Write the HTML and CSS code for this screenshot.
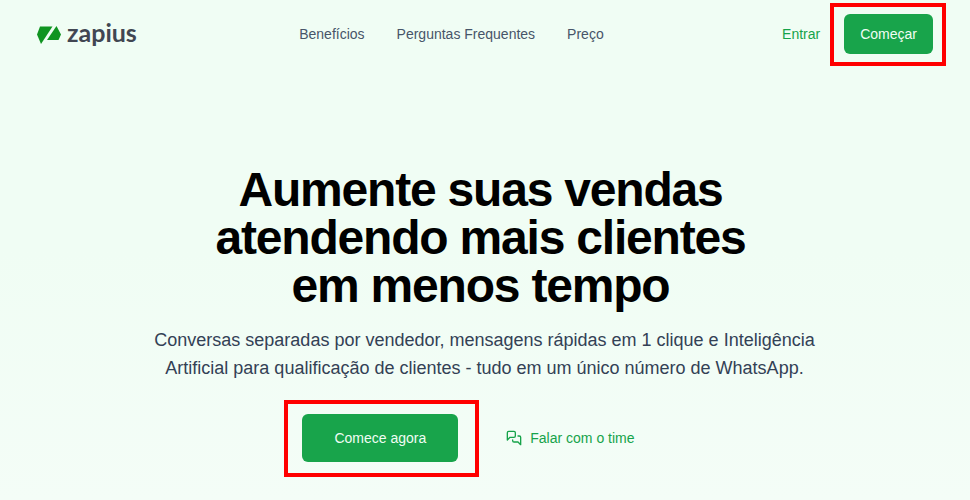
FILE: index.html
```html
<!DOCTYPE html>
<html lang="pt-BR">
<head>
<meta charset="utf-8">
<meta name="viewport" content="width=device-width, initial-scale=1">
<title>Zapius</title>
<link rel="stylesheet" href="styles.css">
</head>
<body>
<header class="topbar">
  <a class="logo" href="#">
    <svg class="logo-mark" viewBox="0 0 24 18" aria-hidden="true">
      <path fill="#109421" d="M3 0.500H15.500L4 18L0 8.500Z"/>
      <path fill="#109421" d="M19.500 0L24 8.500L21.500 14H10Z"/>
    </svg>
    <span class="logo-name">zapius</span>
  </a>
  <nav class="links">
    <a href="#beneficios">Benefícios</a>
    <a href="#perguntas">Perguntas Frequentes</a>
    <a href="#preco">Preço</a>
  </nav>
  <div class="account">
    <a class="link-button" href="#entrar">Entrar</a>
    <div class="marked marked-small"><button class="button" type="button">Começar</button></div>
  </div>
</header>
<main class="hero">
  <h1>Aumente suas vendas<br>atendendo mais clientes<br>em menos tempo</h1>
  <p>Conversas separadas por vendedor, mensagens rápidas em 1 clique e Inteligência Artificial para qualificação de clientes - tudo em um único número de WhatsApp.</p>
  <div class="actions">
    <div class="marked marked-large"><button class="button button-large" type="button">Comece agora</button></div>
    <a class="link-button link-large" href="#contato">
      <svg class="chat-icon" viewBox="0 0 24 24" aria-hidden="true"><path d="M14 9a2 2 0 0 1-2 2H6l-4 4V4c0-1.100.9-2 2-2h8a2 2 0 0 1 2 2z"/><path d="M18 9h2a2 2 0 0 1 2 2v11l-4-4h-6a2 2 0 0 1-2-2v-1"/></svg>
      Falar com o time
    </a>
  </div>
</main>
</body>
</html>
```
FILE: styles.css
```css
* { box-sizing: border-box; }

body {
  margin: 0;
  min-height: 100vh;
  background: linear-gradient(#f0fdf4 50%, #f4fdf7);
  color: #334155;
  font: 14px/20px "Liberation Sans", Arial, sans-serif;
}

a { color: inherit; text-decoration: none; }

.topbar {
  display: flex;
  align-items: center;
  justify-content: space-between;
  padding: 14px 37px;
}

.logo {
  display: flex;
  align-items: center;
  gap: 6px;
  color: #414652;
  font: bold 25px/28px Lato, sans-serif;
}

.logo-mark { width: 24px; height: 18px; margin-top: 2px; }

.logo-name { padding-bottom: 4px; }

.links { display: flex; gap: 32px; color: #475569; }

.account { display: flex; align-items: center; gap: 8px; }

.link-button {
  display: flex;
  align-items: center;
  gap: 8px;
  padding: 10px 16px;
  color: #16a34a;
}

.link-large { padding: 14px 32px; }

.button {
  display: block;
  height: 40px;
  padding: 0 16px;
  border: 0;
  border-radius: 6px;
  background: #18a44b;
  color: #f0fdf4;
  font: inherit;
}

.button-large { height: 48px; padding: 0 32px; }

.marked { position: relative; }

.marked::after {
  content: "";
  position: absolute;
  border: 4px solid #f00;
  pointer-events: none;
}

.marked-small::after { inset: -11px -13px -12px -14px; }

.marked-large::after { inset: -14px -21px -15px -18px; }

.hero {
  display: flex;
  flex-direction: column;
  align-items: center;
  padding: 98px 25px 38px 24px;
  text-align: center;
}

h1 {
  margin: 0 8px 16px 0;
  color: #000;
  font-size: 48px;
  line-height: 48px;
  letter-spacing: -0.025em;
}

.hero p {
  max-width: 672px;
  margin: 0 0 32px;
  font-size: 18px;
  line-height: 28px;
}

.actions { display: flex; gap: 16px; }

.chat-icon {
  width: 16px;
  height: 16px;
  fill: none;
  stroke: currentColor;
  stroke-width: 2;
  stroke-linecap: round;
  stroke-linejoin: round;
}
```
